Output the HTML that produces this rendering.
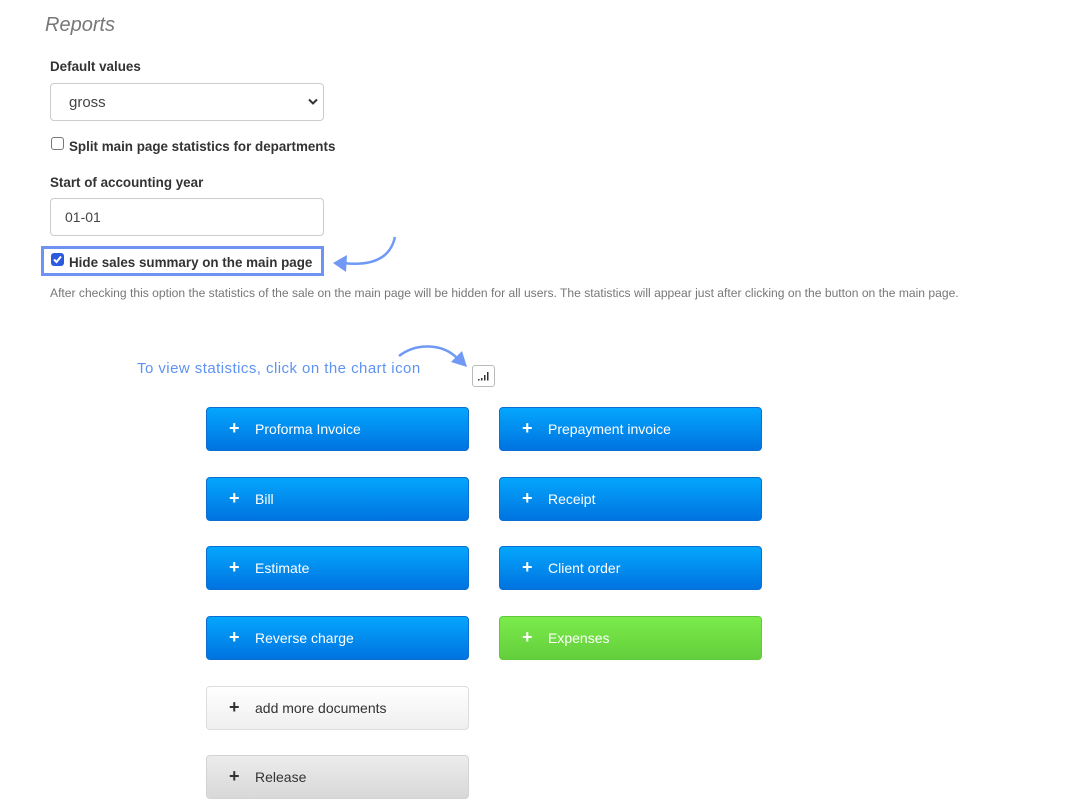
<!DOCTYPE html>
<html><head><style>
body{margin:0;width:1082px;height:812px;background:#fff;font-family:"Liberation Sans",Arial,sans-serif;position:relative;overflow:hidden;color:#333}
.a{position:absolute}
.lbl{font-weight:bold;font-size:13.4px;color:#333}
.field{border:1px solid #ccc;border-radius:4px;background:#fff;box-sizing:border-box}
.btn{position:absolute;width:263px;height:44px;border-radius:4px;box-sizing:border-box;font-size:14px;line-height:43px;color:#fff}
.btn b{position:absolute;left:22px;font-size:18px;top:-1px}
.btn span{position:absolute;left:48px}
.blue{background:linear-gradient(#04a6fd,#0073e0);border:1px solid #0a6fd0}
.green{background:linear-gradient(#7beb4b,#64cf3c);border:1px solid #62c93a}
.white{background:linear-gradient(#fff,#efefef);border:1px solid #ddd;color:#333}
.gray{background:linear-gradient(#ececec,#d8d8d8);border:1px solid #d3d3d3;color:#333}
.cb{width:13px;height:13px;border:1px solid #777;border-radius:3px;box-sizing:border-box;background:#fff}
</style></head><body>
<div class="a" style="left:45px;top:14px;font-size:20px;font-style:italic;color:#777">Reports</div>
<div class="a lbl" style="left:50px;top:59px">Default values</div>
<div class="a field" style="left:50px;top:83px;width:274px;height:38px"></div>
<div class="a" style="left:69px;top:94px;font-size:15px;color:#444">gross</div>
<svg class="a" style="left:308px;top:98px" width="10" height="8"><path d="M1 1.5L5 5.5L9 1.5" stroke="#333" stroke-width="2" fill="none"/></svg>
<div class="a cb" style="left:51px;top:137px"></div>
<div class="a lbl" style="left:69px;top:139px">Split main page statistics for departments</div>
<div class="a lbl" style="left:50px;top:175px">Start of accounting year</div>
<div class="a field" style="left:50px;top:198px;width:274px;height:38px"></div>
<div class="a" style="left:65px;top:209px;font-size:14px;color:#444">01-01</div>
<div class="a" style="left:41px;top:246px;width:283px;height:30px;border:3px solid #6f93f2;box-sizing:border-box"></div>
<div class="a" style="left:51px;top:253px;width:13px;height:13px;border-radius:3px;background:#2c5be0"></div>
<svg class="a" style="left:51px;top:253px" width="13" height="13"><path d="M3 6.5L5.5 9L10 3.5" stroke="#fff" stroke-width="2" fill="none"/></svg>
<div class="a lbl" style="left:69px;top:255px">Hide sales summary on the main page</div>
<svg class="a" style="left:325px;top:233px" width="80" height="45"><path d="M70 4C66 22 52 34 18 30" stroke="#6f99f5" stroke-width="2.5" fill="none"/><path d="M8 30L22 22L21 39Z" fill="#6f99f5"/></svg>
<div class="a" style="left:50px;top:286px;font-size:12.1px;color:#777">After checking this option the statistics of the sale on the main page will be hidden for all users. The statistics will appear just after clicking on the button on the main page.</div>
<div class="a" style="left:137px;top:360px;font-size:15px;color:#5e93f3;letter-spacing:0.45px">To view statistics, click on the chart icon</div>
<svg class="a" style="left:395px;top:340px" width="75" height="30"><path d="M4 16C22 2 48 4 62 18" stroke="#6f99f5" stroke-width="2.5" fill="none"/><path d="M72 27L56 22L67 11Z" fill="#6f99f5"/></svg>
<div class="a" style="left:472px;top:365px;width:23px;height:22px;border:1px solid #bbb;border-radius:3px;box-sizing:border-box;background:#fff"></div>
<svg class="a" style="left:478px;top:371px" width="12" height="10"><rect x="0" y="8" width="1.5" height="1.5" fill="#333"/><rect x="3" y="7" width="1.5" height="2.5" fill="#333"/><rect x="6" y="4" width="1.5" height="5.5" fill="#333"/><rect x="9" y="1" width="1.5" height="8.5" fill="#333"/></svg>
<div class="btn blue" style="left:206px;top:407px"><b>+</b><span>Proforma Invoice</span></div>
<div class="btn blue" style="left:499px;top:407px"><b>+</b><span>Prepayment invoice</span></div>
<div class="btn blue" style="left:206px;top:477px"><b>+</b><span>Bill</span></div>
<div class="btn blue" style="left:499px;top:477px"><b>+</b><span>Receipt</span></div>
<div class="btn blue" style="left:206px;top:546px"><b>+</b><span>Estimate</span></div>
<div class="btn blue" style="left:499px;top:546px"><b>+</b><span>Client order</span></div>
<div class="btn blue" style="left:206px;top:616px"><b>+</b><span>Reverse charge</span></div>
<div class="btn green" style="left:499px;top:616px"><b>+</b><span>Expenses</span></div>
<div class="btn white" style="left:206px;top:686px"><b>+</b><span>add more documents</span></div>
<div class="btn gray" style="left:206px;top:755px"><b>+</b><span>Release</span></div>
</body></html>
